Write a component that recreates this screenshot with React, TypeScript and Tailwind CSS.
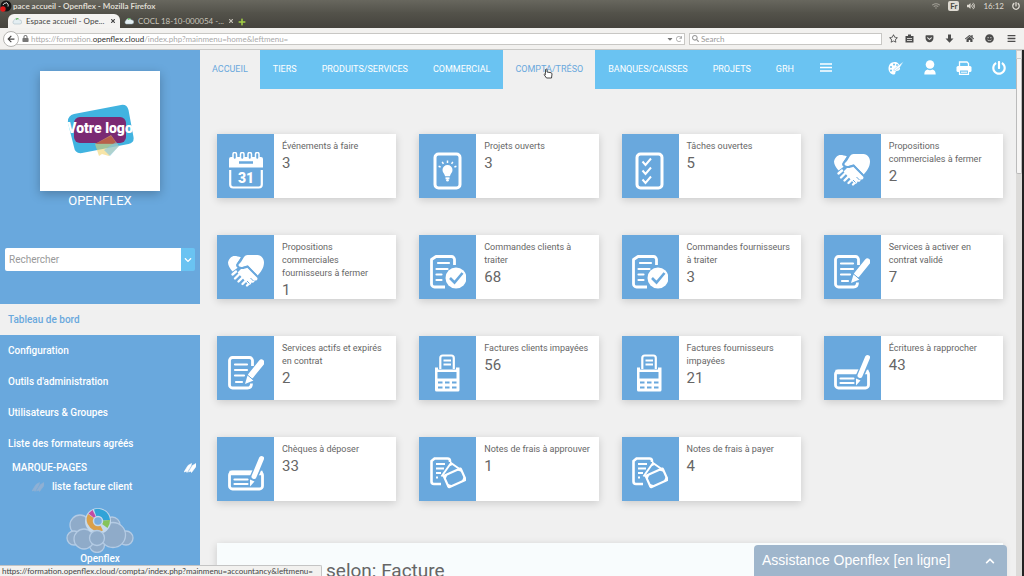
import type { ReactNode } from "react";
import {
  FaArrowLeft,
  FaBars,
  FaCaretDown,
  FaChevronDown,
  FaChevronUp,
  FaGetPocket,
  FaHome,
  FaLock,
  FaPlus,
  FaPowerOff,
  FaRedo,
  FaSearch,
  FaSmile,
  FaRegStar,
  FaTimes,
  FaVolumeUp,
  FaWifi,
} from "react-icons/fa";

const BLUE = "#69a8dd";

type IconName =
  | "calendar"
  | "idea"
  | "tasks"
  | "handshake"
  | "docCheck"
  | "docPen"
  | "terminal"
  | "cheque"
  | "expense";

// Every drawing shares a 36x38 box
const drawings: Record<IconName, ReactNode> = {
  calendar: (
    <>
      <path d="M1 15.5V7a2 2 0 0 1 2-2h30a2 2 0 0 1 2 2v8.500z" fill="#fff" />
      <path d="M11 10.500h14" stroke={BLUE} strokeWidth="2.500" />
      {[6.500, 14, 21.500, 29].map((x) => (
        <rect key={x} x={x - 1.500} y="0.500" width="3.500" height="7" rx="1.750" fill={BLUE} stroke="#fff" strokeWidth="1.500" />
      ))}
      <path d="M2.200 18v14.500a3 3 0 0 0 3 3h25.600a3 3 0 0 0 3-3V18" fill="none" stroke="#fff" strokeWidth="2.200" />
      <text x="18" y="31" textAnchor="middle" fontSize="14" fontWeight="900" fontFamily="Roboto, sans-serif" fill="#fff">
        31
      </text>
    </>
  ),
  idea: (
    <>
      <rect x="5" y="2" width="25" height="34" rx="3.500" fill="none" stroke="#fff" strokeWidth="3" />
      <path d="M17.500 13a5 5 0 0 1 5 5c0 2.500-2 3.500-2.600 6.300h-4.800C14.500 21.500 12.500 20.500 12.500 18a5 5 0 0 1 5-5z" fill="#fff" />
      <path d="M15.500 26.300h4" stroke="#fff" strokeWidth="2" />
      <circle cx="17.500" cy="28.300" r="1.300" fill="#fff" />
      <path d="M17.500 8.500v2.500M12.200 9.800l1.200 2M22.800 9.800l-1.200 2M8.600 14.200l2 .8M26.400 14.200l-2 .8" stroke="#fff" strokeWidth="1.500" />
    </>
  ),
  tasks: (
    <>
      <rect x="5" y="2" width="25" height="34" rx="3.500" fill="none" stroke="#fff" strokeWidth="3" />
      <path d="M10.500 9.500l3 3.500 5.500-6.500M10.500 18.500l3 3.500 5.500-6.500M10.500 27.500l3 3.500 5.500-6.500" fill="none" stroke="#fff" strokeWidth="2" />
    </>
  ),
  handshake: (
    <>
      <path d="M0 9.500C1 5.500 3.500 3 6.500 3c2 0 4.500.5 6.500 1.500L8.500 11c-.8 1.500 0 3 1.500 3.500L4.500 18.500C2 15.500 0 12.500 0 9.500z" fill="#fff" />
      <path d="M13 9l3-5c1-1.300 2-2 3.500-2h10C33.500 2.500 36 5.500 36 9.500c0 5-3 9.500-6.500 13L20 12.500c-2.500.5-4 1.500-6 1.500-2 .2-4-.8-3.500-2.500z" fill="#fff" />
      <path d="M13 16c3 .3 4.500-.8 6.300-1.300l9.700 9.800c1.500 1.700-.8 4-2.500 2.700.6 2-1.700 3.400-3.200 2.200.3 2-2 3-3.500 1.600L9.500 19.500z" fill="#fff" />
      <path d="M8 18.500l-3.500 3M11 21.500l-4 4M14.500 24.500l-4 4M17.500 28l-3 3M20.500 31l-1.500 1.500" stroke="#fff" strokeWidth="2.400" strokeLinecap="round" />
      <path d="M14.500 3.500L9.500 11c-1 2.500 1 4 3.500 4 2.500 0 4.500-1.500 6.500-1.800l9.500 9.500" fill="none" stroke={BLUE} strokeWidth="1.500" />
      <path d="M22.500 25l3 3M19 28l2.500 2.500" stroke={BLUE} strokeWidth="1" />
    </>
  ),
  docCheck: (
    <>
      <path d="M24.500 12V6.500a3 3 0 0 0-3-3H6L1.500 6.500v24.500a3 3 0 0 0 3 3H15" fill="none" stroke="#fff" strokeWidth="2.800" strokeLinejoin="round" />
      <path d="M8 10h11M6.500 16h11M6.500 21.500h5M6.500 27h5" stroke="#fff" strokeWidth="2.200" strokeLinecap="round" />
      <circle cx="26" cy="25" r="10.500" fill="#fff" />
      <path d="M20 25l4.500 4.500 8-9.500" fill="none" stroke={BLUE} strokeWidth="2.600" />
    </>
  ),
  docPen: (
    <>
      <path d="M24.500 12V6.500a3 3 0 0 0-3-3h-17a3 3 0 0 0-3 3v24.500a3 3 0 0 0 3 3h15c2.500 0 4-1.500 4-4.500" fill="none" stroke="#fff" strokeWidth="2.800" />
      <path d="M7 10.500h12M7 16h12M7 21.500h9M8 28h6" stroke="#fff" strokeWidth="2.200" strokeLinecap="round" />
      <path d="M23 21.500L33.500 8.500" stroke="#fff" strokeWidth="6" strokeLinecap="round" />
      <path d="M19.500 21.500l6 5-8.500 3.500z" fill="#fff" />
      <path d="M19.300 20.800l6.500 5.500" stroke={BLUE} strokeWidth="1" />
    </>
  ),
  terminal: (
    <>
      <path d="M10.300 15V4a2.500 2.500 0 0 1 2.500-2.500h8.500A2.500 2.500 0 0 1 23.800 4v11" fill="none" stroke="#fff" strokeWidth="2.200" />
      <path d="M13.500 6.500h7.500M13.500 10.500h7.500" stroke="#fff" strokeWidth="1.800" />
      <path d="M5 13.500h3v2h18v-2h3.500V36a1.500 1.500 0 0 1-1.500 1.500H6.500A1.500 1.500 0 0 1 5 36z" fill="#fff" />
      <rect x="7.500" y="18" width="19" height="6.500" fill={BLUE} />
      <path d="M8 28.500h4.500M15 28.500h4.500M22 28.500h4.500M8 33.500h4.500M15 33.500h4.500M22 33.500h4.500" stroke={BLUE} strokeWidth="2" />
    </>
  ),
  cheque: (
    <>
      <rect x="1.500" y="17" width="33" height="17" rx="3" fill="none" stroke="#fff" strokeWidth="2.800" />
      <path d="M1.500 18h33" stroke="#fff" strokeWidth="4.500" />
      <path d="M6.500 24.500h13M6.500 29h13" stroke="#fff" strokeWidth="2.200" strokeLinecap="round" />
      <path d="M24.500 25L34 3.500" stroke={BLUE} strokeWidth="8" />
      <path d="M26 21.500L33.500 3.500" stroke="#fff" strokeWidth="5" strokeLinecap="round" />
      <path d="M22 24.500l4.500 2-4.500 5z" fill="#fff" />
    </>
  ),
  expense: (
    <>
      <path d="M20 7V6a2.500 2.500 0 0 0-2.500-2.500h-13L1.500 6v20.500a2.500 2.500 0 0 0 2.500 2.500h7" fill="none" stroke="#fff" strokeWidth="2.600" />
      <path d="M6 9h9M6 13.500h8M6 18h5M6 22.500h2" stroke="#fff" strokeWidth="1.800" />
      <path d="M11.500 21.500L21 8l10 7" fill="none" stroke="#fff" strokeWidth="2" strokeLinejoin="round" />
      <path d="M20 6.500l4 3-4 1.500z" fill="#fff" />
      <g transform="rotate(-24 25 23)">
        <rect x="15.500" y="16.500" width="18.500" height="12.500" rx="1" fill={BLUE} stroke="#fff" strokeWidth="2.200" />
        <path d="M15 16h5.500l-5.500 5zM34.500 16H29l5.500 5zM15 29.500h5.500l-5.500-5zM34.500 29.500H29l5.500-5z" fill="#fff" />
      </g>
    </>
  ),
};

const cards: { label: string; value: number; icon: IconName }[] = [
  { label: "Événements à faire", value: 3, icon: "calendar" },
  { label: "Projets ouverts", value: 3, icon: "idea" },
  { label: "Tâches ouvertes", value: 5, icon: "tasks" },
  { label: "Propositions commerciales à fermer", value: 2, icon: "handshake" },
  { label: "Propositions commerciales fournisseurs à fermer", value: 1, icon: "handshake" },
  { label: "Commandes clients à traiter", value: 68, icon: "docCheck" },
  { label: "Commandes fournisseurs à traiter", value: 3, icon: "docCheck" },
  { label: "Services à activer en contrat validé", value: 7, icon: "docPen" },
  { label: "Services actifs et expirés en contrat", value: 2, icon: "docPen" },
  { label: "Factures clients impayées", value: 56, icon: "terminal" },
  { label: "Factures fournisseurs impayées", value: 21, icon: "terminal" },
  { label: "Écritures à rapprocher", value: 43, icon: "cheque" },
  { label: "Chèques à déposer", value: 33, icon: "cheque" },
  { label: "Notes de frais à approuver", value: 1, icon: "expense" },
  { label: "Notes de frais à payer", value: 4, icon: "expense" },
];

const menu = ["TIERS", "PRODUITS/SERVICES", "COMMERCIAL", "COMPTA/TRÉSO", "BANQUES/CAISSES", "PROJETS", "GRH"];

const sideLinks = ["Configuration", "Outils d'administration", "Utilisateurs & Groupes", "Liste des formateurs agréés"];

const CloudIcon = () => (
  <svg viewBox="0 0 10 8" className="h-2 w-2.5 shrink-0" aria-hidden="true">
    <path d="M2 7a2 2 0 0 1 0-3.500A3 3 0 0 1 7.500 3 2 2 0 0 1 8 7z" fill="#e4eef2" stroke="#9fb3bd" strokeWidth=".5" />
    <path d="M4 2.500A2 2 0 0 1 6.500 2" stroke="#5fb65a" strokeWidth="1.200" fill="none" />
  </svg>
);

const BrowserChrome = () => (
  <div className="shrink-0 font-[Lato,'Noto_Sans',sans-serif]">
    <div className="flex h-3 items-center justify-between bg-linear-to-b from-[#68675e] to-[#55544c] pr-1 text-[#dfdbd2]">
      <div className="flex items-center gap-px">
        <svg viewBox="0 0 12 12" className="size-3" aria-hidden="true">
          <circle cx="6" cy="6" r="5.500" fill="#161616" />
          <path d="M6 2.500a3 3 0 0 1 2 4M3 5a3 3 0 0 1 3-2" stroke="#ddd" fill="none" />
          <circle cx="3" cy="9" r="2.700" fill="#e01b1b" />
        </svg>
        <span className="text-[8px] leading-3 font-bold">pace accueil - Openflex - Mozilla Firefox</span>
      </div>
      <div className="flex items-center gap-2 text-[8px] leading-3">
        <FaWifi className="opacity-50" />
        <span className="rounded-xs bg-[#dfdbd2] px-0.5 leading-2.5 font-bold text-[#4a4942]">Fr</span>
        <FaVolumeUp />
        <span>16:12</span>
        <FaPowerOff />
      </div>
    </div>
    <div className="flex h-4 items-end bg-linear-to-b from-[#54534b] to-[#45433d] pl-2">
      <div className="flex h-3.5 w-28 items-center gap-1 rounded-t-md bg-[#f4f3f1] px-1 text-[8px] text-[#444]">
        <CloudIcon />
        <span className="flex-1 whitespace-nowrap">Espace accueil - Ope...</span>
        <FaTimes className="size-1.5 shrink-0" />
      </div>
      <div className="flex h-3.5 w-28 items-center gap-1 pr-1 pl-1 text-[8px] text-[#c9c5bb]">
        <CloudIcon />
        <span className="flex-1 whitespace-nowrap">COCL 18-10-000054 -...</span>
        <FaTimes className="size-1.5 shrink-0" />
      </div>
      <FaPlus className="mb-0.5 ml-1.5 size-2 text-[#a4d143]" />
    </div>
    <div className="flex h-[22px] items-center border-b border-[#c9c8c5] bg-[#f2f1ef] pr-2 pl-[3px]">
      <button type="button" aria-label="Page précédente" className="z-10 -mr-1 flex size-4 shrink-0 items-center justify-center rounded-full border border-[#b5b4b1] bg-white">
        <FaArrowLeft className="size-2 text-[#444]" />
      </button>
      <div className="flex h-3 min-w-0 flex-1 items-center gap-0.5 border border-[#c8c7c4] bg-white pr-0.5 pl-1.5 text-[8px] text-[#aaa]">
        <FaLock className="size-[7px] shrink-0 text-[#777]" />
        <span className="flex-1 truncate">
          https://formation.<span className="text-[#333]">openflex.cloud</span>/index.php?mainmenu=home&leftmenu=
        </span>
        <FaCaretDown className="size-2 text-[#777]" />
        <FaRedo className="size-1.5" />
      </div>
      <div className="ml-1 flex h-3 w-[193px] items-center gap-0.5 border border-[#c8c7c4] bg-white px-0.5">
        <FaSearch className="size-[7px] shrink-0 text-[#999]" />
        <input aria-label="Search" placeholder="Search" className="w-full bg-transparent text-[8px] outline-none placeholder:text-[#999]" />
      </div>
      <div className="ml-[7px] flex items-center gap-[11px] text-[9px] text-[#4c4c4c]">
        <FaRegStar />
        <svg viewBox="0 0 9 9" className="-ml-1 size-[9px]" aria-hidden="true">
          <path d="M.5 2h8v6.500h-8zM3 .5h3V3H3z" fill="#4c4c4c" />
          <path d="M2 4.500h5M2 6.500h5" stroke="#f2f1ef" strokeWidth=".8" />
        </svg>
        <FaGetPocket />
        <svg viewBox="0 0 9 9" className="size-[9px]" aria-hidden="true">
          <path d="M3 .5h3v4h2.500L4.500 8.700.5 4.500H3z" fill="#4c4c4c" />
        </svg>
        <FaHome />
        <FaSmile />
        <FaBars className="ml-0.5" />
      </div>
    </div>
  </div>
);

const BookmarkIcon = ({ color }: { color: string }) => (
  <svg viewBox="0 0 12 10" className="h-2.5 w-3" aria-hidden="true">
    <path d="M0 9L4 2.500 7.500.5 7 3 3 9.500l-.8-1.300zM4.500 9l4-6.500L12 .5v3L7.500 9.500l-.8-1.300z" fill={color} stroke={color} strokeWidth=".6" />
  </svg>
);

const OpenflexLogo = () => (
  <svg viewBox="0 0 68 46" className="h-[46px] w-[68px]" role="img" aria-label="Openflex">
    <g fill="#8fabc9" stroke="#b4cbe4" strokeWidth="1.300">
      <circle cx="14" cy="18" r="10" />
      <circle cx="46" cy="18" r="8" />
      <circle cx="8" cy="31" r="7" />
      <circle cx="60" cy="31" r="7" />
      <circle cx="31" cy="38" r="7.500" />
      <circle cx="18" cy="32" r="10" />
      <circle cx="47" cy="28" r="12.500" />
    </g>
    <circle cx="32" cy="14" r="13" fill="#c5d9ec" />
    <path d="M32 14L28 2.500A12 12 0 0 1 44 13z" fill="#2fa3d8" />
    <path d="M32 14l12-1a12 12 0 0 1-2.500 8z" fill="#86c35a" />
    <path d="M32 14l5 9.500A12 12 0 0 1 22 7z" fill="#dba04a" />
    <path d="M32 14L22.500 6.500l4-3.500z" fill="#c24ba5" />
    <circle cx="32" cy="14" r="4.500" fill="#7aaede" stroke="#c5d9ec" strokeWidth="1.500" />
    <circle cx="31" cy="31" r="7.500" fill="#8fabc9" stroke="#b4cbe4" strokeWidth="1.300" />
  </svg>
);

const Sidebar = () => (
  <aside className="flex w-[200px] shrink-0 flex-col bg-[#69a8dd] text-white">
    <div className="mx-auto mt-[21px] flex size-[120px] items-center justify-center bg-white shadow-[0_3px_10px_rgba(0,0,0,0.25)]">
      <svg viewBox="0 0 68 54" className="h-[54px] w-[68px]" role="img" aria-label="Votre logo">
        <path d="M8 10L55 1q6-1 7.500 5l5 27q1 6-5 7L16 49q-7 1-8-6L2 19q-1-7 6-9z" fill="#41b3e0" />
        <rect x="8" y="13" width="52" height="26" rx="6" fill="#7b2a73" />
        <path d="M29 40l16-9 8 11-10 10-7-2-3 2z" fill="#f0d060" opacity=".55" />
        <path d="M29 40l16-8 6 8z" fill="#b8503c" opacity=".7" />
        <path d="M38 46l12-8 3 4-9 10z" fill="#7fc5e6" opacity=".6" />
        <text x="34" y="29" textAnchor="middle" fontSize="14" fontWeight="900" fontFamily="Roboto, sans-serif" fill="#fff">
          Votre logo
        </text>
      </svg>
    </div>
    <p className="mt-0.5 text-center text-[13px] leading-4">OPENFLEX</p>
    <form className="mx-[5px] mt-[39px] flex h-[23px] overflow-hidden rounded-xs">
      <input aria-label="Rechercher" placeholder="Rechercher" className="min-w-0 flex-1 bg-white px-1 text-[10px] text-[#555] outline-none placeholder:text-[#999]" />
      <button type="button" aria-label="Options de recherche" className="flex w-[14px] items-center justify-center bg-[#6ac3f2]">
        <FaChevronDown className="size-2" />
      </button>
    </form>
    <nav className="mt-[33px] flex flex-col text-[10px] font-medium">
      <a href="#" className="bg-[#f0f0f0] px-2 leading-[31px] text-[#69a8dd]">
        Tableau de bord
      </a>
      {sideLinks.map((link) => (
        <a key={link} href="#" className="px-2 leading-[31px]">
          {link}
        </a>
      ))}
    </nav>
    <div className="mt-px flex items-center justify-between pr-1 pl-3 text-[10px] leading-4 font-medium">
      <span>MARQUE-PAGES</span>
      <BookmarkIcon color="#fff" />
    </div>
    <a href="#" className="mt-[3px] flex items-center gap-2 pl-8 text-[10px] leading-4 font-medium">
      <BookmarkIcon color="#8fb0d4" />
      liste facture client
    </a>
    <div className="mt-3 flex flex-col items-center">
      <OpenflexLogo />
      <span className="text-[10px] leading-3 font-medium">Openflex</span>
    </div>
  </aside>
);

const TopMenu = () => (
  <header className="flex h-[39px] shrink-0 bg-[#6ac3f2] text-[9px] leading-[39px] text-white">
    <nav className="flex gap-px">
      <a href="#" className="bg-[#f0f0f0] px-3 text-[#69a8dd]">
        ACCUEIL
      </a>
      {menu.map((item) =>
        item === "COMPTA/TRÉSO" ? (
          <a key={item} href="#" className="relative bg-[#f0f0f0] px-3 text-[#69a8dd]">
            {item}
            {/* pointer over the hovered entry */}
            <svg viewBox="0 0 10 11" className="absolute top-[18px] left-10 h-[11px] w-2.5" aria-hidden="true">
              <path d="M2.500 5.500V1.500q.7-1 1.500 0V4l4 .7q1 .3 1 1.300l-.5 4h-5L1 6.500q.5-1 1.500 0z" fill="#fff" stroke="#333" strokeWidth=".9" />
            </svg>
          </a>
        ) : (
          <a key={item} href="#" className="px-3">
            {item}
          </a>
        ),
      )}
    </nav>
    <button type="button" aria-label="Plus de menus" className="ml-3.5 flex items-center pb-1">
      <svg viewBox="0 0 12 9" className="h-[9px] w-3" aria-hidden="true">
        <path d="M0 1h12M0 4.500h12M0 8h12" stroke="#fff" strokeWidth="1.300" />
      </svg>
    </button>
    <div className="ml-auto flex items-center gap-5 pr-2.5 pb-1">
      <button type="button" aria-label="Thème">
        <svg viewBox="0 0 16 14" className="h-3.5 w-4" aria-hidden="true">
          <path d="M6.500 1C3 1 .5 3.800.5 7.500c0 3.300 2.300 6 5.500 6 1.500 0 1.200-1.500 1.500-2.500.4-1.300 2-1 3.200-1.500 1-.5 1.500-1.500 1.300-3C11.700 3 9.500 1 6.500 1z" fill="#fff" />
          <g fill="#6ac3f2">
            <circle cx="6" cy="3.500" r="1" />
            <circle cx="3" cy="6" r="1" />
            <circle cx="3" cy="9.500" r="1" />
            <circle cx="9" cy="4" r=".9" />
          </g>
          <path d="M5.500 9L10 4.800 15.500.5 12 6.200 7.500 9.500z" fill="#fff" stroke="#6ac3f2" strokeWidth=".4" />
        </svg>
      </button>
      <button type="button" aria-label="Utilisateur">
        <svg viewBox="0 0 12 15" className="h-[15px] w-3" aria-hidden="true">
          <circle cx="6" cy="4.500" r="4.300" fill="#fff" />
          <path d="M.3 14.500c0-2.500.8-4.500 3.200-5 1.500.9 3.500.9 5 0 2.400.5 3.200 2.500 3.200 5z" fill="#fff" />
        </svg>
      </button>
      <button type="button" aria-label="Imprimer">
        <svg viewBox="0 0 16 14" className="h-3.5 w-4" aria-hidden="true">
          <path d="M3.500 6V1h7.500l1.500 1.500V6" fill="none" stroke="#fff" strokeWidth="1.300" />
          <rect x=".5" y="5" width="15" height="6" rx="1.500" fill="#fff" />
          <path d="M3.500 9h9v4.300h-9z" fill="#6ac3f2" stroke="#fff" strokeWidth="1.200" />
          <path d="M5 11.200h6" stroke="#fff" />
        </svg>
      </button>
      <button type="button" aria-label="Déconnexion">
        <FaPowerOff className="size-3.5" />
      </button>
    </div>
  </header>
);

const StatCard = ({ label, value, icon }: { label: string; value: number; icon: IconName }) => (
  <a href="#" className="flex h-16 overflow-hidden bg-white text-[#666] shadow-[0_2px_8px_rgba(0,0,0,0.16)]">
    <div className="flex w-[57px] shrink-0 items-start justify-center bg-[#69a8dd] pt-[18px]">
      <svg viewBox="0 0 36 38" className="h-[38px] w-9" aria-hidden="true">
        {drawings[icon]}
      </svg>
    </div>
    <div className="min-w-0 flex-1 px-2 pt-1.5">
      <p className="text-[9px] leading-[13px]">{label}</p>
      <p className="text-[15px] leading-5">{value}</p>
    </div>
  </a>
);

const App = () => {
  return (
    <div className="relative flex h-screen flex-col overflow-hidden bg-[#f0f0f0] font-[Roboto,'Liberation_Sans',sans-serif]">
      <BrowserChrome />
      <div className="flex min-h-0 flex-1">
        <Sidebar />
        <div className="flex min-w-0 flex-1 flex-col overflow-hidden">
          <TopMenu />
          <main className="flex flex-col pt-[45px] pr-[13px] pl-[17px]">
            <div className="grid grid-cols-4 gap-x-[23px] gap-y-[37px]">
              {cards.map((card) => (
                <StatCard key={card.label} {...card} />
              ))}
            </div>
            <section className="mt-[42px] bg-[#f8fcfd] pt-4 pb-4 pl-[109px] shadow-[0_2px_8px_rgba(0,0,0,0.16)]">
              <h2 className="text-[19px] leading-6 text-[#666]">selon: Facture</h2>
            </section>
          </main>
        </div>
        <div className="flex w-2 shrink-0 flex-col border-r-2 border-[#222] bg-[#dcdbd9]">
          <div className="h-[9px] border border-[#ccc] bg-[#f2f1ef]" />
          <div className="h-[115px] rounded-b-xs border border-t-0 border-[#bbb] bg-[#f6f5f4]" />
        </div>
      </div>

      {/* link address shown while hovering */}
      <div className="absolute bottom-0 left-0 rounded-tr-xs border-t border-r border-[#c4c4c4] bg-[#f2f1ef] pr-2 pl-0.5 font-[Lato,'Noto_Sans',sans-serif] text-[8px] leading-2.5 text-[#444]">
        https://formation.openflex.cloud/compta/index.php?mainmenu=accountancy&leftmenu=
      </div>

      <button
        type="button"
        className="absolute right-[17px] bottom-0 flex h-[31px] w-[253px] items-center justify-between rounded-t-sm bg-[#9fb6cc] pr-3 pl-2 font-['Liberation_Sans',sans-serif] text-[14px] text-white"
      >
        Assistance Openflex [en ligne]
        <FaChevronUp className="size-2.5" />
      </button>
    </div>
  );
};

export default App;
